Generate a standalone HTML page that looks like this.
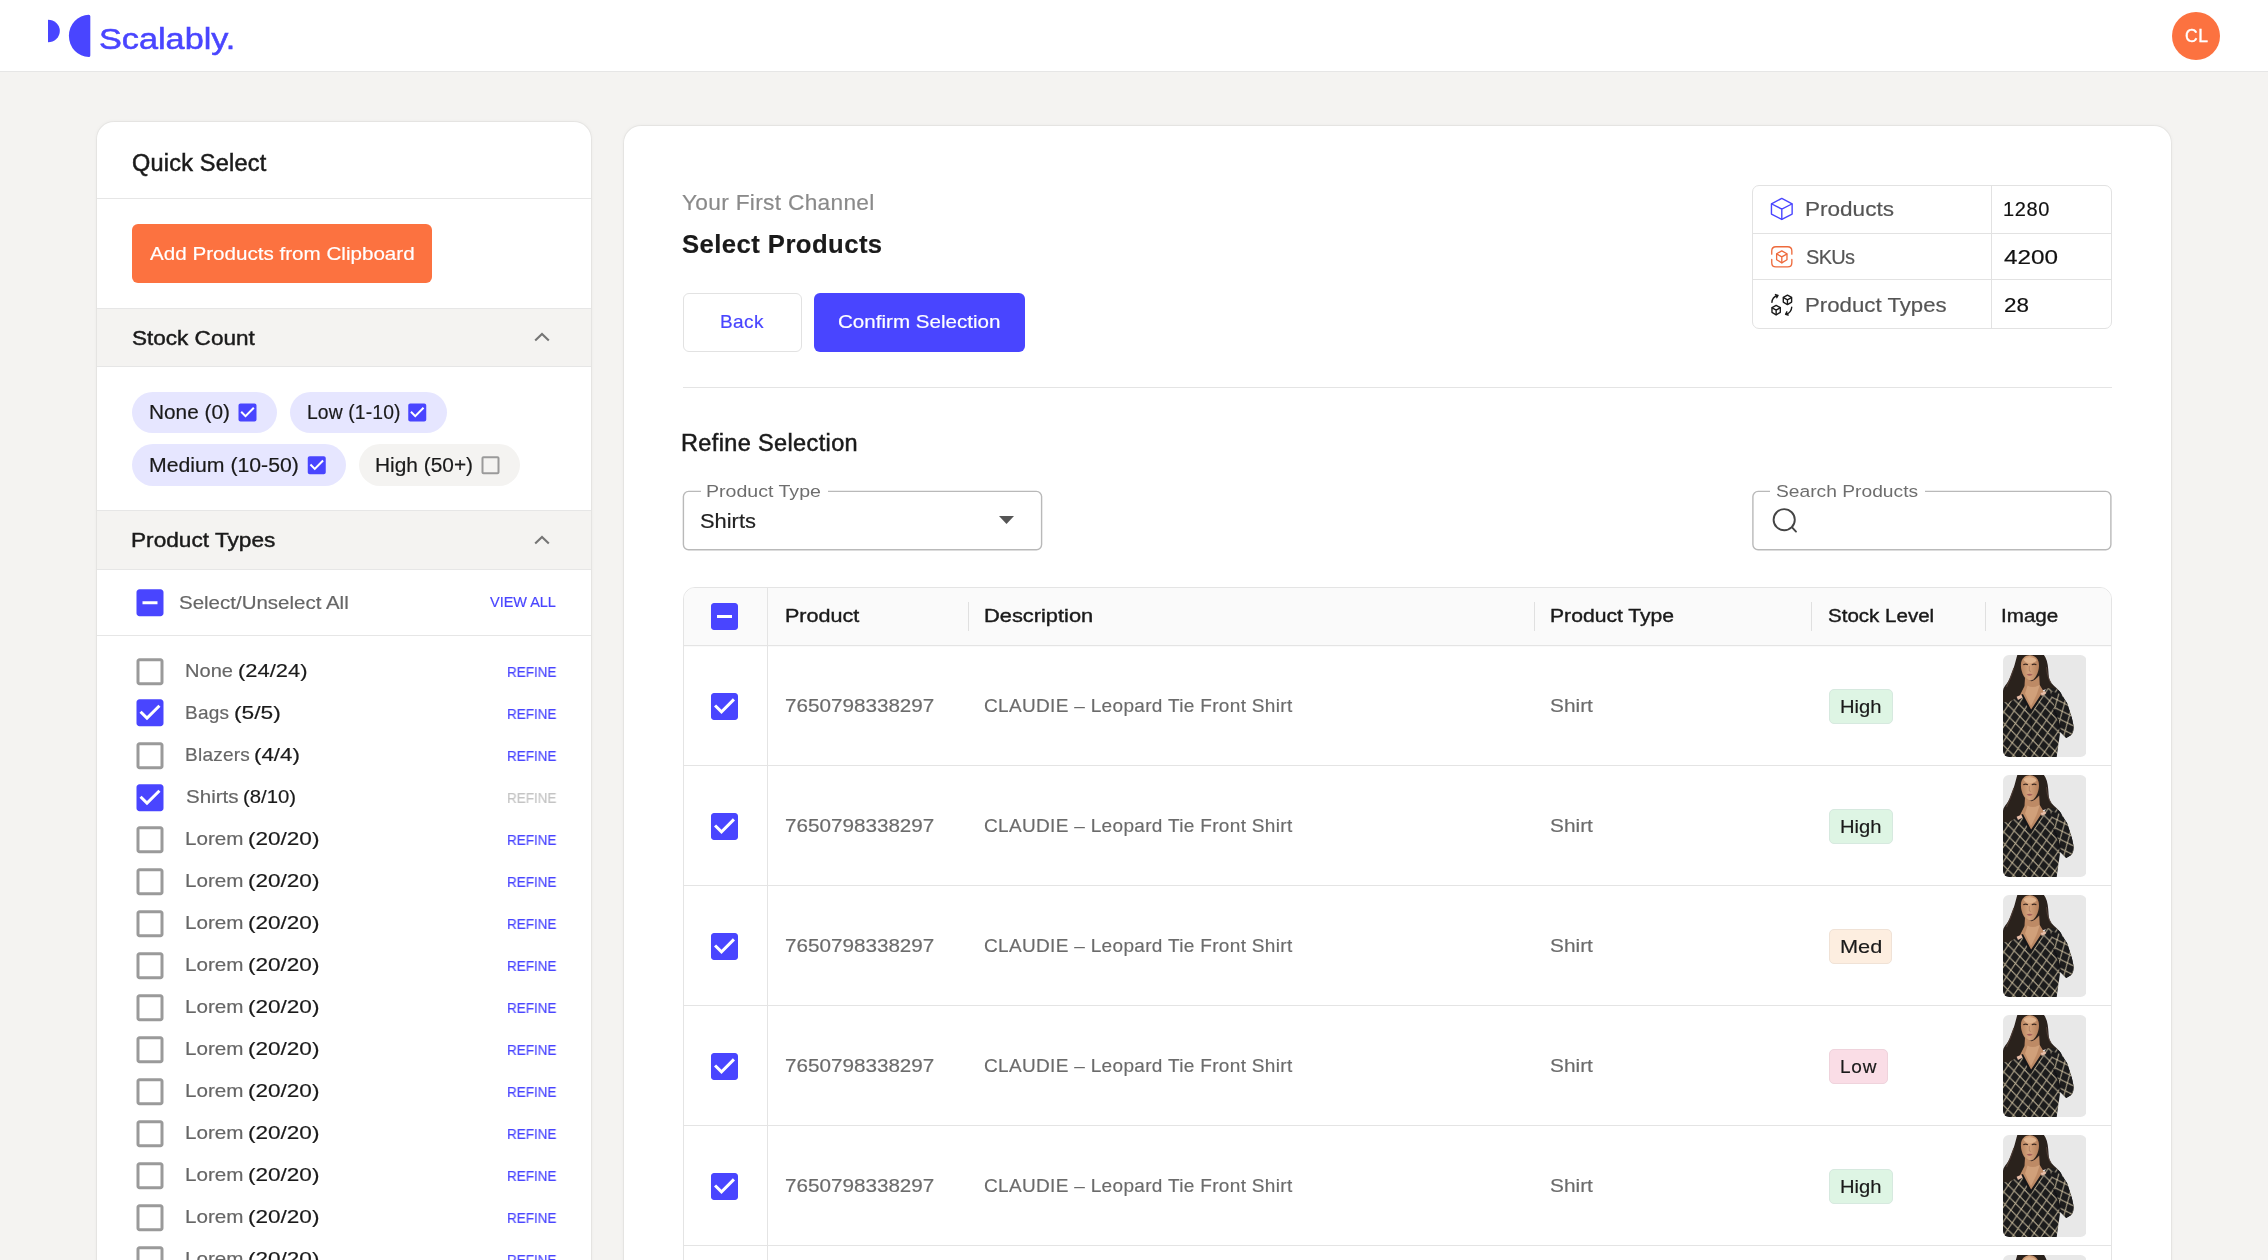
<!DOCTYPE html>
<html lang="en"><head><meta charset="utf-8"><title>Scalably – Select Products</title>
<style>
*{margin:0;padding:0}
html,body{width:2268px;height:1260px;overflow:hidden;background:#f4f3f1}
body{position:relative;font-family:"Liberation Sans",sans-serif}
.b{position:absolute;display:block}
.t{will-change:transform;position:absolute;display:block;white-space:nowrap;line-height:1.117;transform-origin:0 50%;font-weight:400}
h1.t{font-weight:700}
.hdr{left:0;top:0;width:2268px;height:71px;background:#fff;border-bottom:1px solid #e6e6e6}
.avatar{background:#fc7240;border-radius:50%}
.card{background:#fff;border-radius:17px;box-sizing:border-box;box-shadow:0 0 0 1px rgba(0,0,0,0.035),0 0 4px rgba(0,0,0,0.06)}
ul.plain{list-style:none}
</style></head>
<body>
<svg width="0" height="0" style="position:absolute"><defs><pattern id="lat" width="10.4" height="12.6" patternUnits="userSpaceOnUse" patternTransform="rotate(-6)"><rect width="10.4" height="12.6" fill="#1a1a1d"/><path d="M0 0L10.4 12.6M0 12.6L10.4 0" stroke="#c2b697" stroke-width="1.05"/></pattern>
<pattern id="lat2" width="10.4" height="12.6" patternUnits="userSpaceOnUse" patternTransform="rotate(-24)"><rect width="10.4" height="12.6" fill="#1a1a1d"/><path d="M0 0L10.4 12.6M0 12.6L10.4 0" stroke="#c2b697" stroke-width="1.05"/></pattern>
<clipPath id="pclip"><rect width="83.5" height="102" rx="6"/></clipPath>
<filter id="soft" x="-5%" y="-5%" width="110%" height="110%"><feGaussianBlur stdDeviation="0.55"/></filter>
<linearGradient id="skin" x1="0" y1="0" x2="1" y2="0"><stop offset="0" stop-color="#b9845f"/><stop offset=".45" stop-color="#d5a47e"/><stop offset="1" stop-color="#b47f5b"/></linearGradient>
<symbol id="photo" viewBox="0 0 83.5 102"><g clip-path="url(#pclip)">
<rect width="83.5" height="102" fill="#e8e8e8"/>
<g filter="url(#soft)">
<path d="M14.6 -1C13 4 12.6 7 11 12C9.5 17 8.6 19 7.2 22.5C5.5 27 2 30 0.5 33.5C-0.5 37 -0.5 44 0 50C2.5 50 4.5 49 6 47.5C9 46.5 12 44.5 14.5 43L22 39L34 37L42 34.5C47 33 53 34.5 58.5 39C55 33.5 50 30.5 47.5 27C45.5 24 45.8 20 45.2 14C44.8 8 43.5 3 40.3 -1Z" fill="#2a201c"/>
<path d="M11 13Q8 22 3.5 32M43.5 12Q44 22 48 28" stroke="#4d3d34" stroke-width="1.1" fill="none"/>
<path d="M17.9 10.5C17.8 3.5 22 0.3 27 0.3S36.2 4 36 11C35.8 17.5 32 25.8 27 25.8S18 17.5 17.9 10.5Z" fill="url(#skin)"/>
<path d="M20.5 4.8C22.5 1.4 31.5 1.4 33.6 5.6C30 9.2 24 9.4 20.5 4.8Z" fill="#e0b48f"/>
<path d="M20.3 9.7q2.2-1.2 4.6 0M28.8 9.7q2.4-1.2 4.6 0" stroke="#3d2a22" stroke-width="1.1" fill="none"/>
<path d="M26.3 11v5l1.6.4" stroke="#a8775a" stroke-width=".7" fill="none"/>
<path d="M23.6 19.4Q26.6 18 29.7 19.4Q26.6 22.3 23.6 19.4Z" fill="#a55f58"/>
<path d="M22 22.5L21.5 31L17 40L28 57L41 37L36.8 30L36.2 20.5Q30 27.5 27 25.8Z" fill="#bd8a65"/>
<path d="M24.5 30.5Q29.5 33.5 35.5 30.5L36.8 30L33.5 40L28 51L22 38.5Z" fill="#d0a07a"/>
<path d="M0 47L5.5 47.3L13 43.2L19 39.5L28 56.5L40.5 37.5L43.5 33.6L50 33Q55.5 34 58 38.2L64.2 48.3L68.7 62.3L70.7 71.2Q70.8 78 67.8 80.2L63.2 83L57.3 77L56.2 84L53.7 102H0Z" fill="url(#lat)"/>
<path d="M47 36L57.5 39L64.2 48.3L68.7 62.3L70.7 71.2Q70.8 78 67.8 80.2L63.2 83L57.3 77Q55 62 47 36Z" fill="url(#lat2)"/>
<path d="M19 39.5L28 56.5L40.5 37.5" fill="none" stroke="#151518" stroke-width="2"/>
<path d="M57.3 77Q56 65 50.5 54" fill="none" stroke="#0e0e10" stroke-width="1.4" opacity=".75"/>
<path d="M28 56.5Q29 75 27 102" fill="none" stroke="#0e0e10" stroke-width="1" opacity=".5"/>
<path d="M13.6 41.7l4.6-1.9 1.5 2.6-4.7 2.5zM37.6 38.2l4.3-2.3 1.4 2.4-4.5 2.6z" fill="#e6bca6"/>
</g></g></symbol>
</defs></svg>
<header class="b hdr">
<svg class="b" style="left:48px;top:14px" width="44" height="44" viewBox="0 0 44 44"><path d="M0 5.8 A11.8 11.2 0 0 1 0 28.2 Z" fill="#4945ff"/><path d="M42.3 2.3 Q42.3 0.8 40.8 0.8 A19.9 21.05 0 0 0 40.8 42.9 Q42.3 42.9 42.3 41.4 Z" fill="#4945ff"/></svg>
<span id="t1" class="t logo" style="left:99.29px;top:21.90px;font-size:30.00px;color:#4945ff;transform:scaleX(1.1410);-webkit-text-stroke:0.55px #4945ff;">Scalably.</span>
<div class="b avatar" style="left:2172px;top:12px;width:48px;height:48px"></div>
<span id="t2" class="t " style="left:2185.25px;top:27.26px;font-size:17.50px;color:#fff;letter-spacing:0.500px;-webkit-text-stroke:0.35px #fff;">CL</span>
</header>
<aside class="b card" style="left:97px;top:122.2px;width:493.8px;height:1200px">
</aside>
<h2 id="t3" class="t " style="left:131.60px;top:150.10px;font-size:23.50px;color:#1a1a1a;letter-spacing:0.205px;-webkit-text-stroke:0.50px #1a1a1a;">Quick Select</h2>
<div class="b " style="left:97.00px;top:198.00px;width:493.80px;height:1.00px;background:#e6e6e6"></div>
<div class="b btn" style="left:132.00px;top:223.50px;width:300.00px;height:59.75px;background:#fc7240;border-radius:6px"></div>
<span id="t4" class="t " style="left:150.40px;top:242.61px;font-size:18.90px;color:#fff;transform:scaleX(1.0911);-webkit-text-stroke:0.18px #fff;">Add Products from Clipboard</span>
<div class="b " style="left:97.00px;top:308.00px;width:493.80px;height:59.00px;background:#f4f3f1;border-top:1px solid #e6e6e6;border-bottom:1px solid #e6e6e6;box-sizing:border-box"></div>
<h3 id="t5" class="t " style="left:131.63px;top:326.10px;font-size:21.10px;color:#1a1a1a;transform:scaleX(1.0681);-webkit-text-stroke:0.45px #1a1a1a;">Stock Count</h3>
<svg class="b" style="left:531.60px;top:330.20px" width="20" height="14" viewBox="0 0 20 14"><path d="M3.2 10.6 L10 3.9 L16.8 10.6" fill="none" stroke="#757575" stroke-width="2.1"/></svg>
<div class="b " style="left:132.00px;top:391.50px;width:145.00px;height:41.50px;background:#e6e6ff;border-radius:21px"></div><span id="t6" class="t " style="left:149.13px;top:402.00px;font-size:19.30px;color:#1a1a1a;transform:scaleX(1.0793);-webkit-text-stroke:0.18px #1a1a1a;">None (0)</span><svg class="b" style="left:235px;top:400px" width="25" height="25" viewBox="-0.500 -0.500 25.000 25.000"><rect x="4" y="4" width="16" height="16" fill="#fff"/><path d="M19 3H5c-1.11 0-2 .9-2 2v14c0 1.1.89 2 2 2h14c1.11 0 2-.9 2-2V5c0-1.1-.89-2-2-2zm-9 14l-5-5 1.41-1.41L10 14.17l7.59-7.59L19 8l-9 9z" fill="#4945ff"/></svg>
<div class="b " style="left:289.50px;top:391.50px;width:157.25px;height:41.50px;background:#e6e6ff;border-radius:21px"></div><span id="t7" class="t " style="left:306.50px;top:402.00px;font-size:19.30px;color:#1a1a1a;letter-spacing:0.139px;-webkit-text-stroke:0.18px #1a1a1a;">Low (1-10)</span><svg class="b" style="left:405px;top:400px" width="25" height="25" viewBox="-0.250 -0.500 25.000 25.000"><rect x="4" y="4" width="16" height="16" fill="#fff"/><path d="M19 3H5c-1.11 0-2 .9-2 2v14c0 1.1.89 2 2 2h14c1.11 0 2-.9 2-2V5c0-1.1-.89-2-2-2zm-9 14l-5-5 1.41-1.41L10 14.17l7.59-7.59L19 8l-9 9z" fill="#4945ff"/></svg>
<div class="b " style="left:132.00px;top:444.25px;width:214.25px;height:41.50px;background:#e6e6ff;border-radius:21px"></div><span id="t8" class="t " style="left:149.35px;top:454.50px;font-size:19.30px;color:#1a1a1a;transform:scaleX(1.1011);-webkit-text-stroke:0.18px #1a1a1a;">Medium (10-50)</span><svg class="b" style="left:304px;top:453px" width="25" height="25" viewBox="-0.750 -0.250 25.000 25.000"><rect x="4" y="4" width="16" height="16" fill="#fff"/><path d="M19 3H5c-1.11 0-2 .9-2 2v14c0 1.1.89 2 2 2h14c1.11 0 2-.9 2-2V5c0-1.1-.89-2-2-2zm-9 14l-5-5 1.41-1.41L10 14.17l7.59-7.59L19 8l-9 9z" fill="#4945ff"/></svg>
<div class="b " style="left:358.50px;top:444.25px;width:161.50px;height:41.50px;background:#f4f3f1;border-radius:21px"></div><span id="t9" class="t " style="left:375.13px;top:454.50px;font-size:19.30px;color:#1a1a1a;transform:scaleX(1.0824);-webkit-text-stroke:0.18px #1a1a1a;">High (50+)</span><svg class="b" style="left:478px;top:453px" width="25" height="25" viewBox="-0.500 -0.250 25.000 25.000"><path d="M19 5v14H5V5h14m0-2H5c-1.1 0-2 .9-2 2v14c0 1.1.9 2 2 2h14c1.1 0 2-.9 2-2V5c0-1.1-.9-2-2-2z" fill="#9a9a9a"/></svg>
<div class="b " style="left:97.00px;top:510.00px;width:493.80px;height:59.50px;background:#f4f3f1;border-top:1px solid #e6e6e6;border-bottom:1px solid #e6e6e6;box-sizing:border-box"></div>
<h3 id="t10" class="t " style="left:130.82px;top:528.10px;font-size:21.10px;color:#1a1a1a;transform:scaleX(1.0737);-webkit-text-stroke:0.45px #1a1a1a;">Product Types</h3>
<svg class="b" style="left:531.60px;top:533.20px" width="20" height="14" viewBox="0 0 20 14"><path d="M3.2 10.6 L10 3.9 L16.8 10.6" fill="none" stroke="#757575" stroke-width="2.1"/></svg>
<svg class="b" style="left:132px;top:584px" width="37" height="37" viewBox="-0.000 -0.500 24.667 24.667"><rect x="4" y="4" width="16" height="16" fill="#fff"/><path d="M19 3H5c-1.1 0-2 .9-2 2v14c0 1.1.9 2 2 2h14c1.1 0 2-.9 2-2V5c0-1.1-.9-2-2-2zm-2 10H7v-2h10v2z" fill="#4945ff"/></svg>
<span id="t11" class="t " style="left:179.43px;top:592.31px;font-size:19.10px;color:#666;transform:scaleX(1.0732);-webkit-text-stroke:0.18px #666;">Select/Unselect All</span>
<span id="t12" class="t " style="left:489.80px;top:594.40px;font-size:14.50px;color:#4945ff;letter-spacing:-0.029px;-webkit-text-stroke:0.18px #4945ff;">VIEW ALL</span>
<div class="b " style="left:97.00px;top:635.00px;width:493.80px;height:1.00px;background:#e6e6e6"></div>
<ul class="plain">
<li>
<svg class="b" style="left:132px;top:653px" width="37" height="37" viewBox="-0.000 -0.533 24.667 24.667"><path d="M19 5v14H5V5h14m0-2H5c-1.1 0-2 .9-2 2v14c0 1.1.9 2 2 2h14c1.1 0 2-.9 2-2V5c0-1.1-.9-2-2-2z" fill="#9a9a9a"/></svg>
<span id="t13" class="t " style="left:185.22px;top:660.10px;font-size:19.00px;color:#666;transform:scaleX(1.0558);-webkit-text-stroke:0.18px #666;">None</span>
<span id="t14" class="t " style="left:238.06px;top:660.10px;font-size:19.00px;color:#1a1a1a;transform:scaleX(1.1532);-webkit-text-stroke:0.18px #1a1a1a;">(24/24)</span>
<span id="t15" class="t " style="left:507.34px;top:663.50px;font-size:14.50px;color:#4945ff;transform:scaleX(0.9288);-webkit-text-stroke:0.18px #4945ff;">REFINE</span>
</li>
<li>
<svg class="b" style="left:132px;top:694px" width="37" height="37" viewBox="-0.000 -0.533 24.667 24.667"><rect x="4" y="4" width="16" height="16" fill="#fff"/><path d="M19 3H5c-1.11 0-2 .9-2 2v14c0 1.1.89 2 2 2h14c1.11 0 2-.9 2-2V5c0-1.1-.89-2-2-2zm-9 14l-5-5 1.41-1.41L10 14.17l7.59-7.59L19 8l-9 9z" fill="#4945ff"/></svg>
<span id="t16" class="t " style="left:185.30px;top:702.10px;font-size:19.00px;color:#666;letter-spacing:0.217px;-webkit-text-stroke:0.18px #666;">Bags</span>
<span id="t17" class="t " style="left:233.70px;top:702.10px;font-size:19.00px;color:#1a1a1a;transform:scaleX(1.1973);-webkit-text-stroke:0.18px #1a1a1a;">(5/5)</span>
<span id="t18" class="t " style="left:507.34px;top:705.50px;font-size:14.50px;color:#4945ff;transform:scaleX(0.9288);-webkit-text-stroke:0.18px #4945ff;">REFINE</span>
</li>
<li>
<svg class="b" style="left:132px;top:737px" width="37" height="37" viewBox="-0.000 -0.533 24.667 24.667"><path d="M19 5v14H5V5h14m0-2H5c-1.1 0-2 .9-2 2v14c0 1.1.9 2 2 2h14c1.1 0 2-.9 2-2V5c0-1.1-.9-2-2-2z" fill="#9a9a9a"/></svg>
<span id="t19" class="t " style="left:185.30px;top:744.10px;font-size:19.00px;color:#666;letter-spacing:0.242px;-webkit-text-stroke:0.18px #666;">Blazers</span>
<span id="t20" class="t " style="left:254.23px;top:744.10px;font-size:19.00px;color:#1a1a1a;transform:scaleX(1.1755);-webkit-text-stroke:0.18px #1a1a1a;">(4/4)</span>
<span id="t21" class="t " style="left:507.34px;top:747.50px;font-size:14.50px;color:#4945ff;transform:scaleX(0.9288);-webkit-text-stroke:0.18px #4945ff;">REFINE</span>
</li>
<li>
<svg class="b" style="left:132px;top:779px" width="37" height="37" viewBox="-0.000 -0.533 24.667 24.667"><rect x="4" y="4" width="16" height="16" fill="#fff"/><path d="M19 3H5c-1.11 0-2 .9-2 2v14c0 1.1.89 2 2 2h14c1.11 0 2-.9 2-2V5c0-1.1-.89-2-2-2zm-9 14l-5-5 1.41-1.41L10 14.17l7.59-7.59L19 8l-9 9z" fill="#4945ff"/></svg>
<span id="t22" class="t " style="left:185.62px;top:786.10px;font-size:19.00px;color:#666;transform:scaleX(1.0830);-webkit-text-stroke:0.18px #666;">Shirts</span>
<span id="t23" class="t " style="left:242.76px;top:786.10px;font-size:19.00px;color:#1a1a1a;transform:scaleX(1.0688);-webkit-text-stroke:0.18px #1a1a1a;">(8/10)</span>
<span id="t24" class="t " style="left:507.34px;top:789.50px;font-size:14.50px;color:#c4c4c4;transform:scaleX(0.9288);-webkit-text-stroke:0.18px #c4c4c4;">REFINE</span>
</li>
<li>
<svg class="b" style="left:132px;top:821px" width="37" height="37" viewBox="-0.000 -0.533 24.667 24.667"><path d="M19 5v14H5V5h14m0-2H5c-1.1 0-2 .9-2 2v14c0 1.1.9 2 2 2h14c1.1 0 2-.9 2-2V5c0-1.1-.9-2-2-2z" fill="#9a9a9a"/></svg>
<span id="t25" class="t " style="left:185.17px;top:828.10px;font-size:19.00px;color:#666;transform:scaleX(1.0863);-webkit-text-stroke:0.18px #666;">Lorem</span>
<span id="t26" class="t " style="left:247.52px;top:828.10px;font-size:19.00px;color:#1a1a1a;transform:scaleX(1.1861);-webkit-text-stroke:0.18px #1a1a1a;">(20/20)</span>
<span id="t27" class="t " style="left:507.34px;top:831.50px;font-size:14.50px;color:#4945ff;transform:scaleX(0.9288);-webkit-text-stroke:0.18px #4945ff;">REFINE</span>
</li>
<li>
<svg class="b" style="left:132px;top:863px" width="37" height="37" viewBox="-0.000 -0.533 24.667 24.667"><path d="M19 5v14H5V5h14m0-2H5c-1.1 0-2 .9-2 2v14c0 1.1.9 2 2 2h14c1.1 0 2-.9 2-2V5c0-1.1-.9-2-2-2z" fill="#9a9a9a"/></svg>
<span id="t28" class="t " style="left:185.17px;top:870.10px;font-size:19.00px;color:#666;transform:scaleX(1.0863);-webkit-text-stroke:0.18px #666;">Lorem</span>
<span id="t29" class="t " style="left:247.52px;top:870.10px;font-size:19.00px;color:#1a1a1a;transform:scaleX(1.1861);-webkit-text-stroke:0.18px #1a1a1a;">(20/20)</span>
<span id="t30" class="t " style="left:507.34px;top:873.50px;font-size:14.50px;color:#4945ff;transform:scaleX(0.9288);-webkit-text-stroke:0.18px #4945ff;">REFINE</span>
</li>
<li>
<svg class="b" style="left:132px;top:905px" width="37" height="37" viewBox="-0.000 -0.533 24.667 24.667"><path d="M19 5v14H5V5h14m0-2H5c-1.1 0-2 .9-2 2v14c0 1.1.9 2 2 2h14c1.1 0 2-.9 2-2V5c0-1.1-.9-2-2-2z" fill="#9a9a9a"/></svg>
<span id="t31" class="t " style="left:185.17px;top:912.10px;font-size:19.00px;color:#666;transform:scaleX(1.0863);-webkit-text-stroke:0.18px #666;">Lorem</span>
<span id="t32" class="t " style="left:247.52px;top:912.10px;font-size:19.00px;color:#1a1a1a;transform:scaleX(1.1861);-webkit-text-stroke:0.18px #1a1a1a;">(20/20)</span>
<span id="t33" class="t " style="left:507.34px;top:915.50px;font-size:14.50px;color:#4945ff;transform:scaleX(0.9288);-webkit-text-stroke:0.18px #4945ff;">REFINE</span>
</li>
<li>
<svg class="b" style="left:132px;top:947px" width="37" height="37" viewBox="-0.000 -0.533 24.667 24.667"><path d="M19 5v14H5V5h14m0-2H5c-1.1 0-2 .9-2 2v14c0 1.1.9 2 2 2h14c1.1 0 2-.9 2-2V5c0-1.1-.9-2-2-2z" fill="#9a9a9a"/></svg>
<span id="t34" class="t " style="left:185.17px;top:954.10px;font-size:19.00px;color:#666;transform:scaleX(1.0863);-webkit-text-stroke:0.18px #666;">Lorem</span>
<span id="t35" class="t " style="left:247.52px;top:954.10px;font-size:19.00px;color:#1a1a1a;transform:scaleX(1.1861);-webkit-text-stroke:0.18px #1a1a1a;">(20/20)</span>
<span id="t36" class="t " style="left:507.34px;top:957.50px;font-size:14.50px;color:#4945ff;transform:scaleX(0.9288);-webkit-text-stroke:0.18px #4945ff;">REFINE</span>
</li>
<li>
<svg class="b" style="left:132px;top:989px" width="37" height="37" viewBox="-0.000 -0.533 24.667 24.667"><path d="M19 5v14H5V5h14m0-2H5c-1.1 0-2 .9-2 2v14c0 1.1.9 2 2 2h14c1.1 0 2-.9 2-2V5c0-1.1-.9-2-2-2z" fill="#9a9a9a"/></svg>
<span id="t37" class="t " style="left:185.17px;top:996.10px;font-size:19.00px;color:#666;transform:scaleX(1.0863);-webkit-text-stroke:0.18px #666;">Lorem</span>
<span id="t38" class="t " style="left:247.52px;top:996.10px;font-size:19.00px;color:#1a1a1a;transform:scaleX(1.1861);-webkit-text-stroke:0.18px #1a1a1a;">(20/20)</span>
<span id="t39" class="t " style="left:507.34px;top:999.50px;font-size:14.50px;color:#4945ff;transform:scaleX(0.9288);-webkit-text-stroke:0.18px #4945ff;">REFINE</span>
</li>
<li>
<svg class="b" style="left:132px;top:1031px" width="37" height="37" viewBox="-0.000 -0.533 24.667 24.667"><path d="M19 5v14H5V5h14m0-2H5c-1.1 0-2 .9-2 2v14c0 1.1.9 2 2 2h14c1.1 0 2-.9 2-2V5c0-1.1-.9-2-2-2z" fill="#9a9a9a"/></svg>
<span id="t40" class="t " style="left:185.17px;top:1038.11px;font-size:19.00px;color:#666;transform:scaleX(1.0863);-webkit-text-stroke:0.18px #666;">Lorem</span>
<span id="t41" class="t " style="left:247.52px;top:1038.11px;font-size:19.00px;color:#1a1a1a;transform:scaleX(1.1861);-webkit-text-stroke:0.18px #1a1a1a;">(20/20)</span>
<span id="t42" class="t " style="left:507.34px;top:1041.50px;font-size:14.50px;color:#4945ff;transform:scaleX(0.9288);-webkit-text-stroke:0.18px #4945ff;">REFINE</span>
</li>
<li>
<svg class="b" style="left:132px;top:1073px" width="37" height="37" viewBox="-0.000 -0.533 24.667 24.667"><path d="M19 5v14H5V5h14m0-2H5c-1.1 0-2 .9-2 2v14c0 1.1.9 2 2 2h14c1.1 0 2-.9 2-2V5c0-1.1-.9-2-2-2z" fill="#9a9a9a"/></svg>
<span id="t43" class="t " style="left:185.17px;top:1080.11px;font-size:19.00px;color:#666;transform:scaleX(1.0863);-webkit-text-stroke:0.18px #666;">Lorem</span>
<span id="t44" class="t " style="left:247.52px;top:1080.11px;font-size:19.00px;color:#1a1a1a;transform:scaleX(1.1861);-webkit-text-stroke:0.18px #1a1a1a;">(20/20)</span>
<span id="t45" class="t " style="left:507.34px;top:1083.50px;font-size:14.50px;color:#4945ff;transform:scaleX(0.9288);-webkit-text-stroke:0.18px #4945ff;">REFINE</span>
</li>
<li>
<svg class="b" style="left:132px;top:1115px" width="37" height="37" viewBox="-0.000 -0.533 24.667 24.667"><path d="M19 5v14H5V5h14m0-2H5c-1.1 0-2 .9-2 2v14c0 1.1.9 2 2 2h14c1.1 0 2-.9 2-2V5c0-1.1-.9-2-2-2z" fill="#9a9a9a"/></svg>
<span id="t46" class="t " style="left:185.17px;top:1122.11px;font-size:19.00px;color:#666;transform:scaleX(1.0863);-webkit-text-stroke:0.18px #666;">Lorem</span>
<span id="t47" class="t " style="left:247.52px;top:1122.11px;font-size:19.00px;color:#1a1a1a;transform:scaleX(1.1861);-webkit-text-stroke:0.18px #1a1a1a;">(20/20)</span>
<span id="t48" class="t " style="left:507.34px;top:1125.50px;font-size:14.50px;color:#4945ff;transform:scaleX(0.9288);-webkit-text-stroke:0.18px #4945ff;">REFINE</span>
</li>
<li>
<svg class="b" style="left:132px;top:1157px" width="37" height="37" viewBox="-0.000 -0.533 24.667 24.667"><path d="M19 5v14H5V5h14m0-2H5c-1.1 0-2 .9-2 2v14c0 1.1.9 2 2 2h14c1.1 0 2-.9 2-2V5c0-1.1-.9-2-2-2z" fill="#9a9a9a"/></svg>
<span id="t49" class="t " style="left:185.17px;top:1164.11px;font-size:19.00px;color:#666;transform:scaleX(1.0863);-webkit-text-stroke:0.18px #666;">Lorem</span>
<span id="t50" class="t " style="left:247.52px;top:1164.11px;font-size:19.00px;color:#1a1a1a;transform:scaleX(1.1861);-webkit-text-stroke:0.18px #1a1a1a;">(20/20)</span>
<span id="t51" class="t " style="left:507.34px;top:1167.50px;font-size:14.50px;color:#4945ff;transform:scaleX(0.9288);-webkit-text-stroke:0.18px #4945ff;">REFINE</span>
</li>
<li>
<svg class="b" style="left:132px;top:1199px" width="37" height="37" viewBox="-0.000 -0.533 24.667 24.667"><path d="M19 5v14H5V5h14m0-2H5c-1.1 0-2 .9-2 2v14c0 1.1.9 2 2 2h14c1.1 0 2-.9 2-2V5c0-1.1-.9-2-2-2z" fill="#9a9a9a"/></svg>
<span id="t52" class="t " style="left:185.17px;top:1206.11px;font-size:19.00px;color:#666;transform:scaleX(1.0863);-webkit-text-stroke:0.18px #666;">Lorem</span>
<span id="t53" class="t " style="left:247.52px;top:1206.11px;font-size:19.00px;color:#1a1a1a;transform:scaleX(1.1861);-webkit-text-stroke:0.18px #1a1a1a;">(20/20)</span>
<span id="t54" class="t " style="left:507.34px;top:1209.50px;font-size:14.50px;color:#4945ff;transform:scaleX(0.9288);-webkit-text-stroke:0.18px #4945ff;">REFINE</span>
</li>
<li>
<svg class="b" style="left:132px;top:1241px" width="37" height="37" viewBox="-0.000 -0.533 24.667 24.667"><path d="M19 5v14H5V5h14m0-2H5c-1.1 0-2 .9-2 2v14c0 1.1.9 2 2 2h14c1.1 0 2-.9 2-2V5c0-1.1-.9-2-2-2z" fill="#9a9a9a"/></svg>
<span id="t55" class="t " style="left:185.17px;top:1248.11px;font-size:19.00px;color:#666;transform:scaleX(1.0863);-webkit-text-stroke:0.18px #666;">Lorem</span>
<span id="t56" class="t " style="left:247.52px;top:1248.11px;font-size:19.00px;color:#1a1a1a;transform:scaleX(1.1861);-webkit-text-stroke:0.18px #1a1a1a;">(20/20)</span>
<span id="t57" class="t " style="left:507.34px;top:1251.50px;font-size:14.50px;color:#4945ff;transform:scaleX(0.9288);-webkit-text-stroke:0.18px #4945ff;">REFINE</span>
</li>
</ul>
<main class="b card" style="left:623.9px;top:125.6px;width:1547.2px;height:1200px"></main>
<span id="t58" class="t " style="left:682.40px;top:189.90px;font-size:22.70px;color:#8a8a8a;letter-spacing:0.309px;-webkit-text-stroke:0.20px #8a8a8a;">Your First Channel</span>
<h1 id="t59" class="t " style="left:682.35px;top:230.32px;font-size:25.70px;color:#1a1a1a;font-weight:700;letter-spacing:0.429px;-webkit-text-stroke:0.18px #1a1a1a;">Select Products</h1>
<div class="b " style="left:683.00px;top:293.00px;width:119.00px;height:59.00px;border:1px solid #e2e2e2;border-radius:6px;box-sizing:border-box;background:#fff"></div>
<span id="t60" class="t " style="left:720.00px;top:311.30px;font-size:19.00px;color:#4945ff;letter-spacing:0.417px;-webkit-text-stroke:0.18px #4945ff;">Back</span>
<div class="b " style="left:814.25px;top:292.50px;width:210.25px;height:59.75px;background:#4945ff;border-radius:6px"></div>
<span id="t61" class="t " style="left:838.42px;top:311.30px;font-size:19.00px;color:#fff;transform:scaleX(1.0829);-webkit-text-stroke:0.18px #fff;">Confirm Selection</span>
<div class="b " style="left:683.00px;top:387.00px;width:1428.75px;height:1.00px;background:#e4e4e4"></div>
<div class="b " style="left:1752.00px;top:185.00px;width:360.00px;height:143.50px;border:1px solid #e2e2e2;border-radius:7px;box-sizing:border-box"></div>
<div class="b " style="left:1753.00px;top:233.00px;width:358.00px;height:1.00px;background:#e2e2e2"></div>
<div class="b " style="left:1753.00px;top:279.00px;width:358.00px;height:1.00px;background:#e2e2e2"></div>
<div class="b " style="left:1991.00px;top:185.50px;width:1.00px;height:142.00px;background:#e2e2e2"></div>
<svg class="b" style="left:1769.2px;top:195.70px" width="25.6" height="25.6" viewBox="0 0 24 24" fill="none" stroke="#4945ff" stroke-width="1.3" stroke-linejoin="round" stroke-linecap="round"><path d="M12 2.2 L21.7 7.4 V16.9 L12 22 L2.3 16.9 V7.4 Z"/><path d="M2.6 7.5 L12 12.2 L21.4 7.5 M12 12.2 V21.8"/></svg>
<svg class="b" style="left:1769.2px;top:243.70px" width="25.6" height="25.6" viewBox="0 0 24 24" fill="none" stroke="#ee6a3c" stroke-width="1.35" stroke-linejoin="round" stroke-linecap="round"><g transform="translate(12 12) scale(0.915) translate(-12 -12)"><path d="M1.7 9.3 V6 Q1.7 1.7 6 1.7 H18 Q22.3 1.7 22.3 6 V9.3 M22.3 14.7 V18 Q22.3 22.3 18 22.3 H6 Q1.7 22.3 1.7 18 V14.7"/><path d="M12 5.9 L17.3 8.9 V15 L12 18.2 L6.7 15 V8.9 Z"/><path d="M7 9.2 L12 12.1 L17 9.2 M12 12.1 V18"/></g></svg>
<svg class="b" style="left:1769.2px;top:291.70px" width="25.6" height="25.6" viewBox="0 0 24 24" fill="none" stroke="#1a1a1a" stroke-width="1.4" stroke-linejoin="round" stroke-linecap="round"><g transform="translate(12 12) scale(0.93) translate(-12 -12)"><path d="M17.7 2.3 L21.9 4.6 V9.3 L17.7 11.8 L13.5 9.3 V4.6 Z"/><path d="M13.8 4.8 L17.7 7 L21.6 4.8 M17.7 7 V11.6"/><path d="M6.3 12.6 L10.5 14.9 V19.6 L6.3 22.1 L2.1 19.6 V14.9 Z"/><path d="M2.4 15.1 L6.3 17.3 L10.2 15.1 M6.3 17.3 V21.9"/><path d="M2 9.6 Q2.4 4.2 7.6 2.6 M5.6 1.7 L8.2 2.5 L6.9 4.9"/><path d="M22 14.4 Q21.6 19.8 16.4 21.4 M18.4 22.3 L15.8 21.5 L17.1 19.1"/></g></svg>
<span id="t62" class="t " style="left:1804.81px;top:198.22px;font-size:20.00px;color:#555;transform:scaleX(1.1270);-webkit-text-stroke:0.18px #555;">Products</span>
<span id="t63" class="t " style="left:1805.50px;top:245.91px;font-size:20.00px;color:#555;letter-spacing:-0.667px;-webkit-text-stroke:0.18px #555;">SKUs</span>
<span id="t64" class="t " style="left:1804.83px;top:293.91px;font-size:20.00px;color:#555;transform:scaleX(1.1116);-webkit-text-stroke:0.18px #555;">Product Types</span>
<span id="t65" class="t " style="left:2003.25px;top:198.22px;font-size:20.00px;color:#111;letter-spacing:0.667px;-webkit-text-stroke:0.18px #111;">1280</span>
<span id="t66" class="t " style="left:2004.14px;top:245.91px;font-size:20.00px;color:#111;transform:scaleX(1.2139);-webkit-text-stroke:0.18px #111;">4200</span>
<span id="t67" class="t " style="left:2003.63px;top:293.91px;font-size:20.00px;color:#111;transform:scaleX(1.1220);-webkit-text-stroke:0.18px #111;">28</span>
<h2 id="t68" class="t " style="left:681.00px;top:429.60px;font-size:23.50px;color:#1a1a1a;letter-spacing:0.367px;-webkit-text-stroke:0.50px #1a1a1a;">Refine Selection</h2>
<svg class="b" style="left:680px;top:488px" width="366" height="66" viewBox="0 0 366 66"><rect x="3.4" y="3.4" width="358.2" height="58.3" rx="5.2" fill="none" stroke="#b9b9b9" stroke-width="1.4"/></svg>
<div class="b " style="left:700.50px;top:489.00px;width:127.50px;height:5.00px;background:#fff"></div>
<span id="t69" class="t " style="left:706.23px;top:483.01px;font-size:16.70px;color:#6e6e6e;transform:scaleX(1.1720);">Product Type</span>
<span id="t70" class="t " style="left:700.12px;top:509.81px;font-size:20.30px;color:#222;transform:scaleX(1.0786);-webkit-text-stroke:0.18px #222;">Shirts</span>
<svg class="b" style="left:998.75px;top:516.25px" width="15" height="8" viewBox="0 0 15 8"><path d="M0 0 H15 L7.5 8 Z" fill="#555"/></svg>
<svg class="b" style="left:1749px;top:488px" width="366" height="66" viewBox="0 0 366 66"><rect x="3.9" y="3.4" width="358" height="58.3" rx="5.2" fill="none" stroke="#b9b9b9" stroke-width="1.4"/></svg>
<div class="b " style="left:1770.00px;top:489.00px;width:154.50px;height:5.00px;background:#fff"></div>
<span id="t71" class="t " style="left:1775.84px;top:483.01px;font-size:16.70px;color:#6e6e6e;transform:scaleX(1.1517);">Search Products</span>
<svg class="b" style="left:1771px;top:507px" width="28" height="28" viewBox="0 0 28 28" fill="none" stroke="#444" stroke-width="1.9" stroke-linecap="round"><circle cx="13.2" cy="12.7" r="10.6"/><path d="M21.3 20.6 L25 24.6"/></svg>
<div class="b tbl" style="left:683.00px;top:587.00px;width:1428.75px;height:800.00px;border:1px solid #e4e4e4;border-radius:12px;box-sizing:border-box;overflow:hidden"><div class="b" style="left:0;top:0;width:1428px;height:58.5px;background:#fafafa"></div></div>
<div class="b " style="left:684.00px;top:645.00px;width:1427.00px;height:1.00px;background:#e4e4e4"></div>
<div class="b " style="left:767.00px;top:587.50px;width:1.00px;height:700.00px;background:#e4e4e4"></div>
<div class="b " style="left:968.00px;top:601.75px;width:1.00px;height:29.50px;background:#e0e0e0"></div>
<div class="b " style="left:1533.50px;top:601.75px;width:1.00px;height:29.50px;background:#e0e0e0"></div>
<div class="b " style="left:1811.00px;top:601.75px;width:1.00px;height:29.50px;background:#e0e0e0"></div>
<div class="b " style="left:1985.25px;top:601.75px;width:1.00px;height:29.50px;background:#e0e0e0"></div>
<svg class="b" style="left:706px;top:598px" width="37" height="37" viewBox="-0.333 -0.333 24.667 24.667"><rect x="4" y="4" width="16" height="16" fill="#fff"/><path d="M19 3H5c-1.1 0-2 .9-2 2v14c0 1.1.9 2 2 2h14c1.1 0 2-.9 2-2V5c0-1.1-.9-2-2-2zm-2 10H7v-2h10v2z" fill="#4945ff"/></svg>
<span id="t72" class="t " style="left:784.56px;top:605.41px;font-size:19.10px;color:#1a1a1a;transform:scaleX(1.1284);-webkit-text-stroke:0.40px #1a1a1a;">Product</span>
<span id="t73" class="t " style="left:984.04px;top:605.41px;font-size:19.10px;color:#1a1a1a;transform:scaleX(1.1429);-webkit-text-stroke:0.40px #1a1a1a;">Description</span>
<span id="t74" class="t " style="left:1549.59px;top:605.41px;font-size:19.10px;color:#1a1a1a;transform:scaleX(1.1066);-webkit-text-stroke:0.40px #1a1a1a;">Product Type</span>
<span id="t75" class="t " style="left:1827.67px;top:605.41px;font-size:19.10px;color:#1a1a1a;transform:scaleX(1.0751);-webkit-text-stroke:0.40px #1a1a1a;">Stock Level</span>
<span id="t76" class="t " style="left:2000.61px;top:605.41px;font-size:19.10px;color:#1a1a1a;transform:scaleX(1.0792);-webkit-text-stroke:0.40px #1a1a1a;">Image</span>
<svg class="b" style="left:706px;top:688px" width="37" height="37" viewBox="-0.333 -0.333 24.667 24.667"><rect x="4" y="4" width="16" height="16" fill="#fff"/><path d="M19 3H5c-1.11 0-2 .9-2 2v14c0 1.1.89 2 2 2h14c1.11 0 2-.9 2-2V5c0-1.1-.89-2-2-2zm-9 14l-5-5 1.41-1.41L10 14.17l7.59-7.59L19 8l-9 9z" fill="#4945ff"/></svg>
<span id="t77" class="t " style="left:784.91px;top:695.40px;font-size:19.00px;color:#6b6b6b;transform:scaleX(1.0871);-webkit-text-stroke:0.18px #6b6b6b;">7650798338297</span>
<span id="t78" class="t " style="left:984.40px;top:695.40px;font-size:19.00px;color:#6b6b6b;letter-spacing:0.325px;-webkit-text-stroke:0.18px #6b6b6b;">CLAUDIE – Leopard Tie Front Shirt</span>
<span id="t79" class="t " style="left:1550.15px;top:695.40px;font-size:19.00px;color:#6b6b6b;transform:scaleX(1.0987);-webkit-text-stroke:0.18px #6b6b6b;">Shirt</span>
<div class="b " style="left:1828.70px;top:689.00px;width:64.00px;height:34.75px;background:#def5e4;border:1px solid #d6e9df;border-radius:5px;box-sizing:border-box"></div>
<span id="t80" class="t " style="left:1840.21px;top:695.51px;font-size:19.00px;color:#1a1a1a;transform:scaleX(1.0621);-webkit-text-stroke:0.18px #1a1a1a;">High</span>
<svg class="b" style="left:2002.5px;top:655.40px" width="83.5" height="102" viewBox="0 0 83.5 102"><use href="#photo"/></svg>
<div class="b " style="left:684.00px;top:765.00px;width:1427.00px;height:1.00px;background:#e4e4e4"></div>
<svg class="b" style="left:706px;top:808px" width="37" height="37" viewBox="-0.333 -0.333 24.667 24.667"><rect x="4" y="4" width="16" height="16" fill="#fff"/><path d="M19 3H5c-1.11 0-2 .9-2 2v14c0 1.1.89 2 2 2h14c1.11 0 2-.9 2-2V5c0-1.1-.89-2-2-2zm-9 14l-5-5 1.41-1.41L10 14.17l7.59-7.59L19 8l-9 9z" fill="#4945ff"/></svg>
<span id="t81" class="t " style="left:784.91px;top:815.40px;font-size:19.00px;color:#6b6b6b;transform:scaleX(1.0871);-webkit-text-stroke:0.18px #6b6b6b;">7650798338297</span>
<span id="t82" class="t " style="left:984.40px;top:815.40px;font-size:19.00px;color:#6b6b6b;letter-spacing:0.325px;-webkit-text-stroke:0.18px #6b6b6b;">CLAUDIE – Leopard Tie Front Shirt</span>
<span id="t83" class="t " style="left:1550.15px;top:815.40px;font-size:19.00px;color:#6b6b6b;transform:scaleX(1.0987);-webkit-text-stroke:0.18px #6b6b6b;">Shirt</span>
<div class="b " style="left:1828.70px;top:809.00px;width:64.00px;height:34.75px;background:#def5e4;border:1px solid #d6e9df;border-radius:5px;box-sizing:border-box"></div>
<span id="t84" class="t " style="left:1840.21px;top:815.51px;font-size:19.00px;color:#1a1a1a;transform:scaleX(1.0621);-webkit-text-stroke:0.18px #1a1a1a;">High</span>
<svg class="b" style="left:2002.5px;top:775.40px" width="83.5" height="102" viewBox="0 0 83.5 102"><use href="#photo"/></svg>
<div class="b " style="left:684.00px;top:885.00px;width:1427.00px;height:1.00px;background:#e4e4e4"></div>
<svg class="b" style="left:706px;top:928px" width="37" height="37" viewBox="-0.333 -0.333 24.667 24.667"><rect x="4" y="4" width="16" height="16" fill="#fff"/><path d="M19 3H5c-1.11 0-2 .9-2 2v14c0 1.1.89 2 2 2h14c1.11 0 2-.9 2-2V5c0-1.1-.89-2-2-2zm-9 14l-5-5 1.41-1.41L10 14.17l7.59-7.59L19 8l-9 9z" fill="#4945ff"/></svg>
<span id="t85" class="t " style="left:784.91px;top:935.40px;font-size:19.00px;color:#6b6b6b;transform:scaleX(1.0871);-webkit-text-stroke:0.18px #6b6b6b;">7650798338297</span>
<span id="t86" class="t " style="left:984.40px;top:935.40px;font-size:19.00px;color:#6b6b6b;letter-spacing:0.325px;-webkit-text-stroke:0.18px #6b6b6b;">CLAUDIE – Leopard Tie Front Shirt</span>
<span id="t87" class="t " style="left:1550.15px;top:935.40px;font-size:19.00px;color:#6b6b6b;transform:scaleX(1.0987);-webkit-text-stroke:0.18px #6b6b6b;">Shirt</span>
<div class="b " style="left:1828.70px;top:929.00px;width:63.60px;height:34.75px;background:#fdeee0;border:1px solid #f0e2d6;border-radius:5px;box-sizing:border-box"></div>
<span id="t88" class="t " style="left:1840.08px;top:935.51px;font-size:19.00px;color:#1a1a1a;transform:scaleX(1.1445);-webkit-text-stroke:0.18px #1a1a1a;">Med</span>
<svg class="b" style="left:2002.5px;top:895.40px" width="83.5" height="102" viewBox="0 0 83.5 102"><use href="#photo"/></svg>
<div class="b " style="left:684.00px;top:1005.00px;width:1427.00px;height:1.00px;background:#e4e4e4"></div>
<svg class="b" style="left:706px;top:1048px" width="37" height="37" viewBox="-0.333 -0.333 24.667 24.667"><rect x="4" y="4" width="16" height="16" fill="#fff"/><path d="M19 3H5c-1.11 0-2 .9-2 2v14c0 1.1.89 2 2 2h14c1.11 0 2-.9 2-2V5c0-1.1-.89-2-2-2zm-9 14l-5-5 1.41-1.41L10 14.17l7.59-7.59L19 8l-9 9z" fill="#4945ff"/></svg>
<span id="t89" class="t " style="left:784.91px;top:1055.41px;font-size:19.00px;color:#6b6b6b;transform:scaleX(1.0871);-webkit-text-stroke:0.18px #6b6b6b;">7650798338297</span>
<span id="t90" class="t " style="left:984.40px;top:1055.41px;font-size:19.00px;color:#6b6b6b;letter-spacing:0.325px;-webkit-text-stroke:0.18px #6b6b6b;">CLAUDIE – Leopard Tie Front Shirt</span>
<span id="t91" class="t " style="left:1550.15px;top:1055.41px;font-size:19.00px;color:#6b6b6b;transform:scaleX(1.0987);-webkit-text-stroke:0.18px #6b6b6b;">Shirt</span>
<div class="b " style="left:1828.70px;top:1049.00px;width:59.30px;height:34.75px;background:#fadde6;border:1px solid #efd3dc;border-radius:5px;box-sizing:border-box"></div>
<span id="t92" class="t " style="left:1840.30px;top:1055.51px;font-size:19.00px;color:#1a1a1a;letter-spacing:0.750px;-webkit-text-stroke:0.18px #1a1a1a;">Low</span>
<svg class="b" style="left:2002.5px;top:1015.40px" width="83.5" height="102" viewBox="0 0 83.5 102"><use href="#photo"/></svg>
<div class="b " style="left:684.00px;top:1125.00px;width:1427.00px;height:1.00px;background:#e4e4e4"></div>
<svg class="b" style="left:706px;top:1168px" width="37" height="37" viewBox="-0.333 -0.333 24.667 24.667"><rect x="4" y="4" width="16" height="16" fill="#fff"/><path d="M19 3H5c-1.11 0-2 .9-2 2v14c0 1.1.89 2 2 2h14c1.11 0 2-.9 2-2V5c0-1.1-.89-2-2-2zm-9 14l-5-5 1.41-1.41L10 14.17l7.59-7.59L19 8l-9 9z" fill="#4945ff"/></svg>
<span id="t93" class="t " style="left:784.91px;top:1175.41px;font-size:19.00px;color:#6b6b6b;transform:scaleX(1.0871);-webkit-text-stroke:0.18px #6b6b6b;">7650798338297</span>
<span id="t94" class="t " style="left:984.40px;top:1175.41px;font-size:19.00px;color:#6b6b6b;letter-spacing:0.325px;-webkit-text-stroke:0.18px #6b6b6b;">CLAUDIE – Leopard Tie Front Shirt</span>
<span id="t95" class="t " style="left:1550.15px;top:1175.41px;font-size:19.00px;color:#6b6b6b;transform:scaleX(1.0987);-webkit-text-stroke:0.18px #6b6b6b;">Shirt</span>
<div class="b " style="left:1828.70px;top:1169.00px;width:64.00px;height:34.75px;background:#def5e4;border:1px solid #d6e9df;border-radius:5px;box-sizing:border-box"></div>
<span id="t96" class="t " style="left:1840.21px;top:1175.51px;font-size:19.00px;color:#1a1a1a;transform:scaleX(1.0621);-webkit-text-stroke:0.18px #1a1a1a;">High</span>
<svg class="b" style="left:2002.5px;top:1135.40px" width="83.5" height="102" viewBox="0 0 83.5 102"><use href="#photo"/></svg>
<div class="b " style="left:684.00px;top:1245.00px;width:1427.00px;height:1.00px;background:#e4e4e4"></div>
<svg class="b" style="left:706px;top:1288px" width="37" height="37" viewBox="-0.333 -0.333 24.667 24.667"><rect x="4" y="4" width="16" height="16" fill="#fff"/><path d="M19 3H5c-1.11 0-2 .9-2 2v14c0 1.1.89 2 2 2h14c1.11 0 2-.9 2-2V5c0-1.1-.89-2-2-2zm-9 14l-5-5 1.41-1.41L10 14.17l7.59-7.59L19 8l-9 9z" fill="#4945ff"/></svg>
<span id="t97" class="t " style="left:784.91px;top:1295.41px;font-size:19.00px;color:#6b6b6b;transform:scaleX(1.0871);-webkit-text-stroke:0.18px #6b6b6b;">7650798338297</span>
<span id="t98" class="t " style="left:984.40px;top:1295.41px;font-size:19.00px;color:#6b6b6b;letter-spacing:0.325px;-webkit-text-stroke:0.18px #6b6b6b;">CLAUDIE – Leopard Tie Front Shirt</span>
<span id="t99" class="t " style="left:1550.15px;top:1295.41px;font-size:19.00px;color:#6b6b6b;transform:scaleX(1.0987);-webkit-text-stroke:0.18px #6b6b6b;">Shirt</span>
<div class="b " style="left:1828.70px;top:1289.00px;width:64.00px;height:34.75px;background:#def5e4;border:1px solid #d6e9df;border-radius:5px;box-sizing:border-box"></div>
<span id="t100" class="t " style="left:1840.21px;top:1295.51px;font-size:19.00px;color:#1a1a1a;transform:scaleX(1.0621);-webkit-text-stroke:0.18px #1a1a1a;">High</span>
<svg class="b" style="left:2002.5px;top:1255.40px" width="83.5" height="102" viewBox="0 0 83.5 102"><use href="#photo"/></svg>
</body></html>
